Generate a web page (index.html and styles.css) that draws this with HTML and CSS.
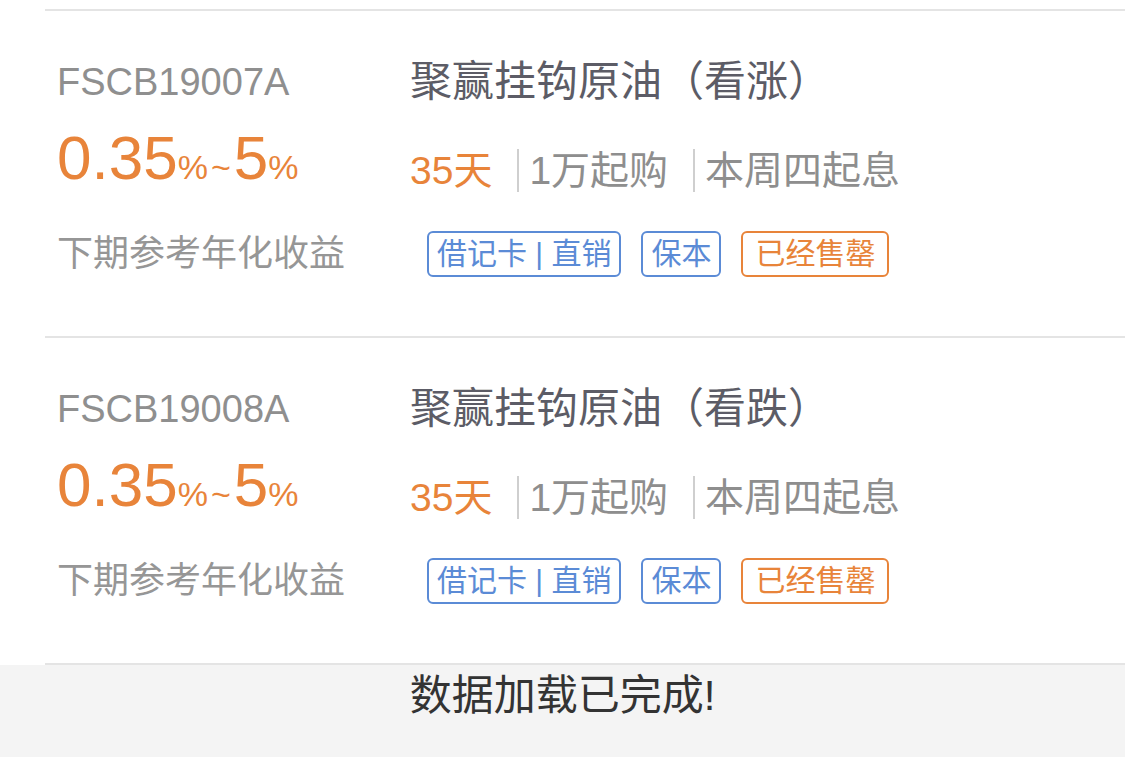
FILE: index.html
```html
<!DOCTYPE html>
<html lang="zh-CN">
<head>
  <meta charset="UTF-8" />
  <meta name="viewport" content="width=device-width, initial-scale=1.0"/>
  <title>产品列表</title>
  <link rel="stylesheet" href="styles.css">
</head>
<body>

<div class="top-space"></div>

<div class="list">
  <div class="item">
    <div class="left">
      <div class="code">FSCB19007A</div>
      <div class="rate">0.35<small>%~</small>5<small>%</small></div>
      <div class="label">下期参考年化收益</div>
    </div>
    <div class="right">
      <div class="title">聚赢挂钩原油（看涨）</div>
      <div class="info">
        <span class="days">35天</span>
        <span class="part">1万起购</span>
        <span class="part">本周四起息</span>
      </div>
      <div class="tags">
        <span class="tag">借记卡 | 直销</span>
        <span class="tag">保本</span>
        <span class="tag sold">已经售罄</span>
      </div>
    </div>
  </div>

  <div class="item">
    <div class="left">
      <div class="code">FSCB19008A</div>
      <div class="rate">0.35<small>%~</small>5<small>%</small></div>
      <div class="label">下期参考年化收益</div>
    </div>
    <div class="right">
      <div class="title">聚赢挂钩原油（看跌）</div>
      <div class="info">
        <span class="days">35天</span>
        <span class="part">1万起购</span>
        <span class="part">本周四起息</span>
      </div>
      <div class="tags">
        <span class="tag">借记卡 | 直销</span>
        <span class="tag">保本</span>
        <span class="tag sold">已经售罄</span>
      </div>
    </div>
  </div>
</div>

<div class="footer">数据加载已完成!</div>

</body>
</html>
```

FILE: styles.css
```css
body {
  margin: 0;
  background: #fff;
  font-family: "Liberation Sans", "Noto Sans CJK SC", sans-serif;
}

.top-space {
  height: 9px;
  margin-left: 45px;
  border-bottom: 2px solid #e4e4e4;
}

.item {
  display: flex;
  height: 325px;
  margin-left: 45px;
  padding-left: 12px;
  border-bottom: 2px solid #e4e4e4;
}

.left {
  width: 353px;
  display: flex;
  flex-direction: column;
  padding-top: 51px;
}

.code {
  font-size: 38px;
  line-height: 40px;
  color: #8f8f8f;
}

.rate {
  margin-top: 25px;
  font-size: 62px;
  line-height: 62px;
  color: #e8843a;
}

.rate small {
  font-size: 34px;
  letter-spacing: 3px;
}

.label {
  margin-top: 38px;
  font-size: 36px;
  line-height: 36px;
  color: #969696;
}

.right {
  display: flex;
  flex-direction: column;
  padding-top: 50px;
}

.title {
  font-size: 42px;
  line-height: 42px;
  color: #5c5c66;
}

.info {
  margin-top: 46px;
  display: flex;
  align-items: center;
  font-size: 39px;
  line-height: 43px;
  color: #8e8e8e;
}

.days {
  color: #e8843a;
  margin-right: 25px;
}

.part {
  border-left: 2px solid #cfcfcf;
  padding-left: 10px;
  margin-right: 25px;
}

.tags {
  margin-top: 39px;
  margin-left: 17px;
  display: flex;
  gap: 20px;
}

.tag {
  height: 42px;
  line-height: 42px;
  padding: 0 8px;
  border: 2px solid #5b8bd6;
  border-radius: 6px;
  color: #5b8bd6;
  font-size: 30px;
}

.tag.sold {
  padding: 0 12px;
  border-color: #e8843a;
  color: #e8843a;
}

.footer {
  background: #f4f4f4;
  height: 95px;
  text-align: center;
  font-size: 42px;
  line-height: 62px;
  color: #333;
}
```
